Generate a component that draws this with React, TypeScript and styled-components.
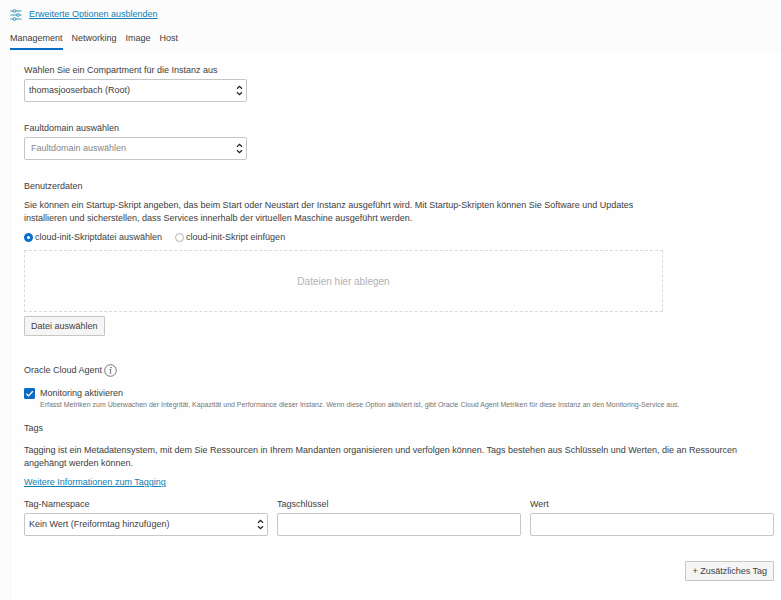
import React, { useState } from "react";
import styled, { createGlobalStyle, css } from "styled-components";

const GlobalStyle = createGlobalStyle`
  *, *::before, *::after { box-sizing: border-box; }
  body {
    margin: 0;
    background: #fcfcfc;
    color: #404040;
    font-family: "Liberation Sans", Arial, sans-serif;
    font-size: 9px;
    line-height: 13px;
  }
  button, input, select { font: inherit; color: inherit; margin: 0; }
`;

const Page = styled.div`
  display: flex;
  flex-direction: column;
  min-height: 100vh;
  padding-left: 10px;
`;

const Header = styled.header`
  display: flex;
  align-items: center;
  gap: 7px;
  padding-top: 8px;
`;

const Link = styled.a`
  color: #0f80b4;
  text-decoration: underline;
`;

const TabList = styled.div`
  display: flex;
  gap: 9px;
  margin-top: 11px;
`;

const Tab = styled.button<{ $active: boolean }>`
  padding: 0 0 3px;
  border: 0;
  border-bottom: 2px solid ${(p) => (p.$active ? "#0a6cc4" : "transparent")};
  background: none;
  cursor: pointer;
`;

const Panel = styled.main`
  flex: 1;
  display: flex;
  flex-direction: column;
  align-items: stretch;
  margin-top: 1px;
  padding: 12px 7px 18px 13px;
  border-left: 1px solid #f7f7f7;
  border-top: 1px solid #f9f9f9;
  background: #fefefe;
`;

const Field = styled.div<{ $narrow?: boolean }>`
  display: flex;
  flex-direction: column;
  gap: 2px;
  min-width: 0;
  ${(p) =>
    p.$narrow &&
    css`
      max-width: 223px;
      margin-bottom: 20px;
    `}
`;

const control = css`
  width: 100%;
  height: 23px;
  border: 1px solid #c4c6c8;
  border-radius: 2px;
  background: #fff;
`;

const SelectWrap = styled.div`
  display: grid;
  align-items: center;
  & > * { grid-area: 1 / 1; }
  & > svg { justify-self: end; margin-right: 4px; pointer-events: none; }
`;

const Select = styled.select<{ $placeholder?: boolean }>`
  ${control}
  appearance: none;
  padding: 0 16px 0 ${(p) => (p.$placeholder ? 6 : 4)}px;
  color: ${(p) => (p.$placeholder ? "#858585" : "#404040")};
`;

const TextInput = styled.input`
  ${control}
  padding: 0 4px;
`;

const Heading = styled.h2`
  margin: 0;
  font-size: 9px;
  font-weight: 400;
`;

const Text = styled.p<{ $wide?: boolean }>`
  margin: ${(p) => (p.$wide ? 9 : 6)}px 0 6px;
  max-width: ${(p) => (p.$wide ? 720 : 640)}px;
`;

const RadioRow = styled.div`
  display: flex;
  gap: 13px;
  margin-bottom: 6px;
`;

const RadioLabel = styled.label`
  display: flex;
  align-items: center;
  gap: 2px;
`;

const Radio = styled.input`
  appearance: none;
  width: 9px;
  height: 9px;
  border: 1px solid #b4b4b4;
  border-radius: 50%;
  background: #fff;
  &:checked { border: 3px solid #0a6fc8; }
`;

const DropZone = styled.div`
  display: flex;
  align-items: center;
  justify-content: center;
  max-width: 639px;
  height: 62px;
  border: 1px dashed #d8dadc;
  color: #b3b3b3;
  font-size: 10px;
`;

const Button = styled.button`
  height: 20px;
  padding: 0 6px;
  border: 1px solid #c6c6c6;
  border-radius: 1px;
  background: #f5f5f5;
  cursor: pointer;
`;

const FileButton = styled(Button)`
  align-self: flex-start;
  margin-top: 4px;
`;

const AddButton = styled(Button)`
  align-self: flex-end;
  margin-top: 25px;
`;

const AgentRow = styled.div`
  display: flex;
  align-items: center;
  gap: 2px;
  height: 13px;
  margin-top: 28px;
`;

const CheckRow = styled.div`
  display: grid;
  grid-template-columns: 11px 1fr;
  column-gap: 5px;
  align-items: center;
  margin: 10px 0 13px;
`;

const CheckWrap = styled.span`
  display: grid;
  & > * { grid-area: 1 / 1; }
  & > svg { pointer-events: none; }
`;

const Checkbox = styled.input`
  appearance: none;
  width: 11px;
  height: 11px;
  border: 1px solid #8c8c8c;
  border-radius: 1px;
  background: #fff;
  &:checked { border-color: #0a6cc4; background: #0a6cc4; }
`;

const Hint = styled.span`
  grid-column: 2;
  color: #757575;
  font-size: 7px;
  line-height: 9px;
`;

const TagGrid = styled.div`
  display: grid;
  grid-template-columns: repeat(3, minmax(0, 1fr));
  gap: 9px;
  margin-top: 9px;
`;

const SlidersIcon = () => (
  <svg width="12" height="12" viewBox="0 0 12 12" fill="none" stroke="#2389b4" strokeWidth="0.9" aria-hidden="true">
    <path d="M0.5 2H3M6 2h5.500M0.500 6H6.500M9.500 6h2M0.500 10H3M6 10h5.500" />
    <circle cx="4.500" cy="2" r="1.400" />
    <circle cx="8" cy="6" r="1.400" />
    <circle cx="4.500" cy="10" r="1.400" />
  </svg>
);

const ChevronsIcon = () => (
  <svg width="7" height="11" viewBox="0 0 7 11" fill="none" stroke="#222" strokeWidth="1.300" aria-hidden="true">
    <path d="M1 3.700L3.500 1.300L6 3.700M1 7.300L3.500 9.700L6 7.300" />
  </svg>
);

const InfoIcon = () => (
  <svg width="13" height="13" viewBox="0 0 13 13" fill="none" stroke="#666" strokeWidth="0.900" aria-hidden="true">
    <circle cx="6.500" cy="6.500" r="5.800" />
    <path d="M5.500 5.500H6.900L6.100 9.300H7.300" />
    <circle cx="7" cy="3.600" r="0.400" fill="#666" />
  </svg>
);

const CheckIcon = () => (
  <svg width="11" height="11" viewBox="0 0 11 11" fill="none" stroke="#fff" strokeWidth="1.300" aria-hidden="true">
    <path d="M2.300 5.700L4.500 7.900L8.800 3.200" />
  </svg>
);

type SelectFieldProps = {
  id: string;
  label: string;
  value: string;
  narrow?: boolean;
  placeholder?: boolean;
};

const SelectField = ({ id, label, value, narrow, placeholder }: SelectFieldProps) => (
  <Field $narrow={narrow}>
    <label htmlFor={id}>{label}</label>
    <SelectWrap>
      <Select id={id} $placeholder={placeholder}>
        <option>{value}</option>
      </Select>
      <ChevronsIcon />
    </SelectWrap>
  </Field>
);

const TextField = ({ id, label }: { id: string; label: string }) => (
  <Field>
    <label htmlFor={id}>{label}</label>
    <TextInput id={id} type="text" />
  </Field>
);

const tabs = ["Management", "Networking", "Image", "Host"];

export default function App() {
  const [active, setActive] = useState("Management");
  const [monitoring, setMonitoring] = useState(true);

  return (
    <>
      <GlobalStyle />
      <Page>
        <Header>
          <SlidersIcon />
          <Link href="#optionen">Erweiterte Optionen ausblenden</Link>
        </Header>
        <TabList role="tablist">
          {tabs.map((name) => (
            <Tab
              key={name}
              type="button"
              role="tab"
              aria-selected={name === active}
              $active={name === active}
              onClick={() => setActive(name)}
            >
              {name}
            </Tab>
          ))}
        </TabList>
        <Panel>
          <SelectField
            narrow
            id="compartment"
            label="Wählen Sie ein Compartment für die Instanz aus"
            value="thomasjooserbach (Root)"
          />
          <SelectField
            narrow
            placeholder
            id="faultdomain"
            label="Faultdomain auswählen"
            value="Faultdomain auswählen"
          />

          <Heading>Benutzerdaten</Heading>
          <Text>
            Sie können ein Startup-Skript angeben, das beim Start oder Neustart der Instanz ausgeführt wird. Mit
            Startup-Skripten können Sie Software und Updates installieren und sicherstellen, dass Services innerhalb
            der virtuellen Maschine ausgeführt werden.
          </Text>
          <RadioRow>
            <RadioLabel>
              <Radio type="radio" name="script" defaultChecked />
              cloud-init-Skriptdatei auswählen
            </RadioLabel>
            <RadioLabel>
              <Radio type="radio" name="script" />
              cloud-init-Skript einfügen
            </RadioLabel>
          </RadioRow>
          <DropZone>Dateien hier ablegen</DropZone>
          <FileButton type="button">Datei auswählen</FileButton>

          <AgentRow>
            <Heading>Oracle Cloud Agent</Heading>
            <InfoIcon />
          </AgentRow>
          <CheckRow>
            <CheckWrap>
              <Checkbox
                id="monitoring"
                type="checkbox"
                checked={monitoring}
                onChange={(e) => setMonitoring(e.target.checked)}
              />
              {monitoring && <CheckIcon />}
            </CheckWrap>
            <label htmlFor="monitoring">Monitoring aktivieren</label>
            <Hint>
              Erfasst Metriken zum Überwachen der Integrität, Kapazität und Performance dieser Instanz. Wenn diese
              Option aktiviert ist, gibt Oracle Cloud Agent Metriken für diese Instanz an den Monitoring-Service aus.
            </Hint>
          </CheckRow>

          <Heading>Tags</Heading>
          <Text $wide>
            Tagging ist ein Metadatensystem, mit dem Sie Ressourcen in Ihrem Mandanten organisieren und verfolgen
            können. Tags bestehen aus Schlüsseln und Werten, die an Ressourcen angehängt werden können.
          </Text>
          <div>
            <Link href="#tagging">Weitere Informationen zum Tagging</Link>
          </div>
          <TagGrid>
            <SelectField id="namespace" label="Tag-Namespace" value="Kein Wert (Freiformtag hinzufügen)" />
            <TextField id="key" label="Tagschlüssel" />
            <TextField id="value" label="Wert" />
          </TagGrid>
          <AddButton type="button">+ Zusätzliches Tag</AddButton>
        </Panel>
      </Page>
    </>
  );
}
